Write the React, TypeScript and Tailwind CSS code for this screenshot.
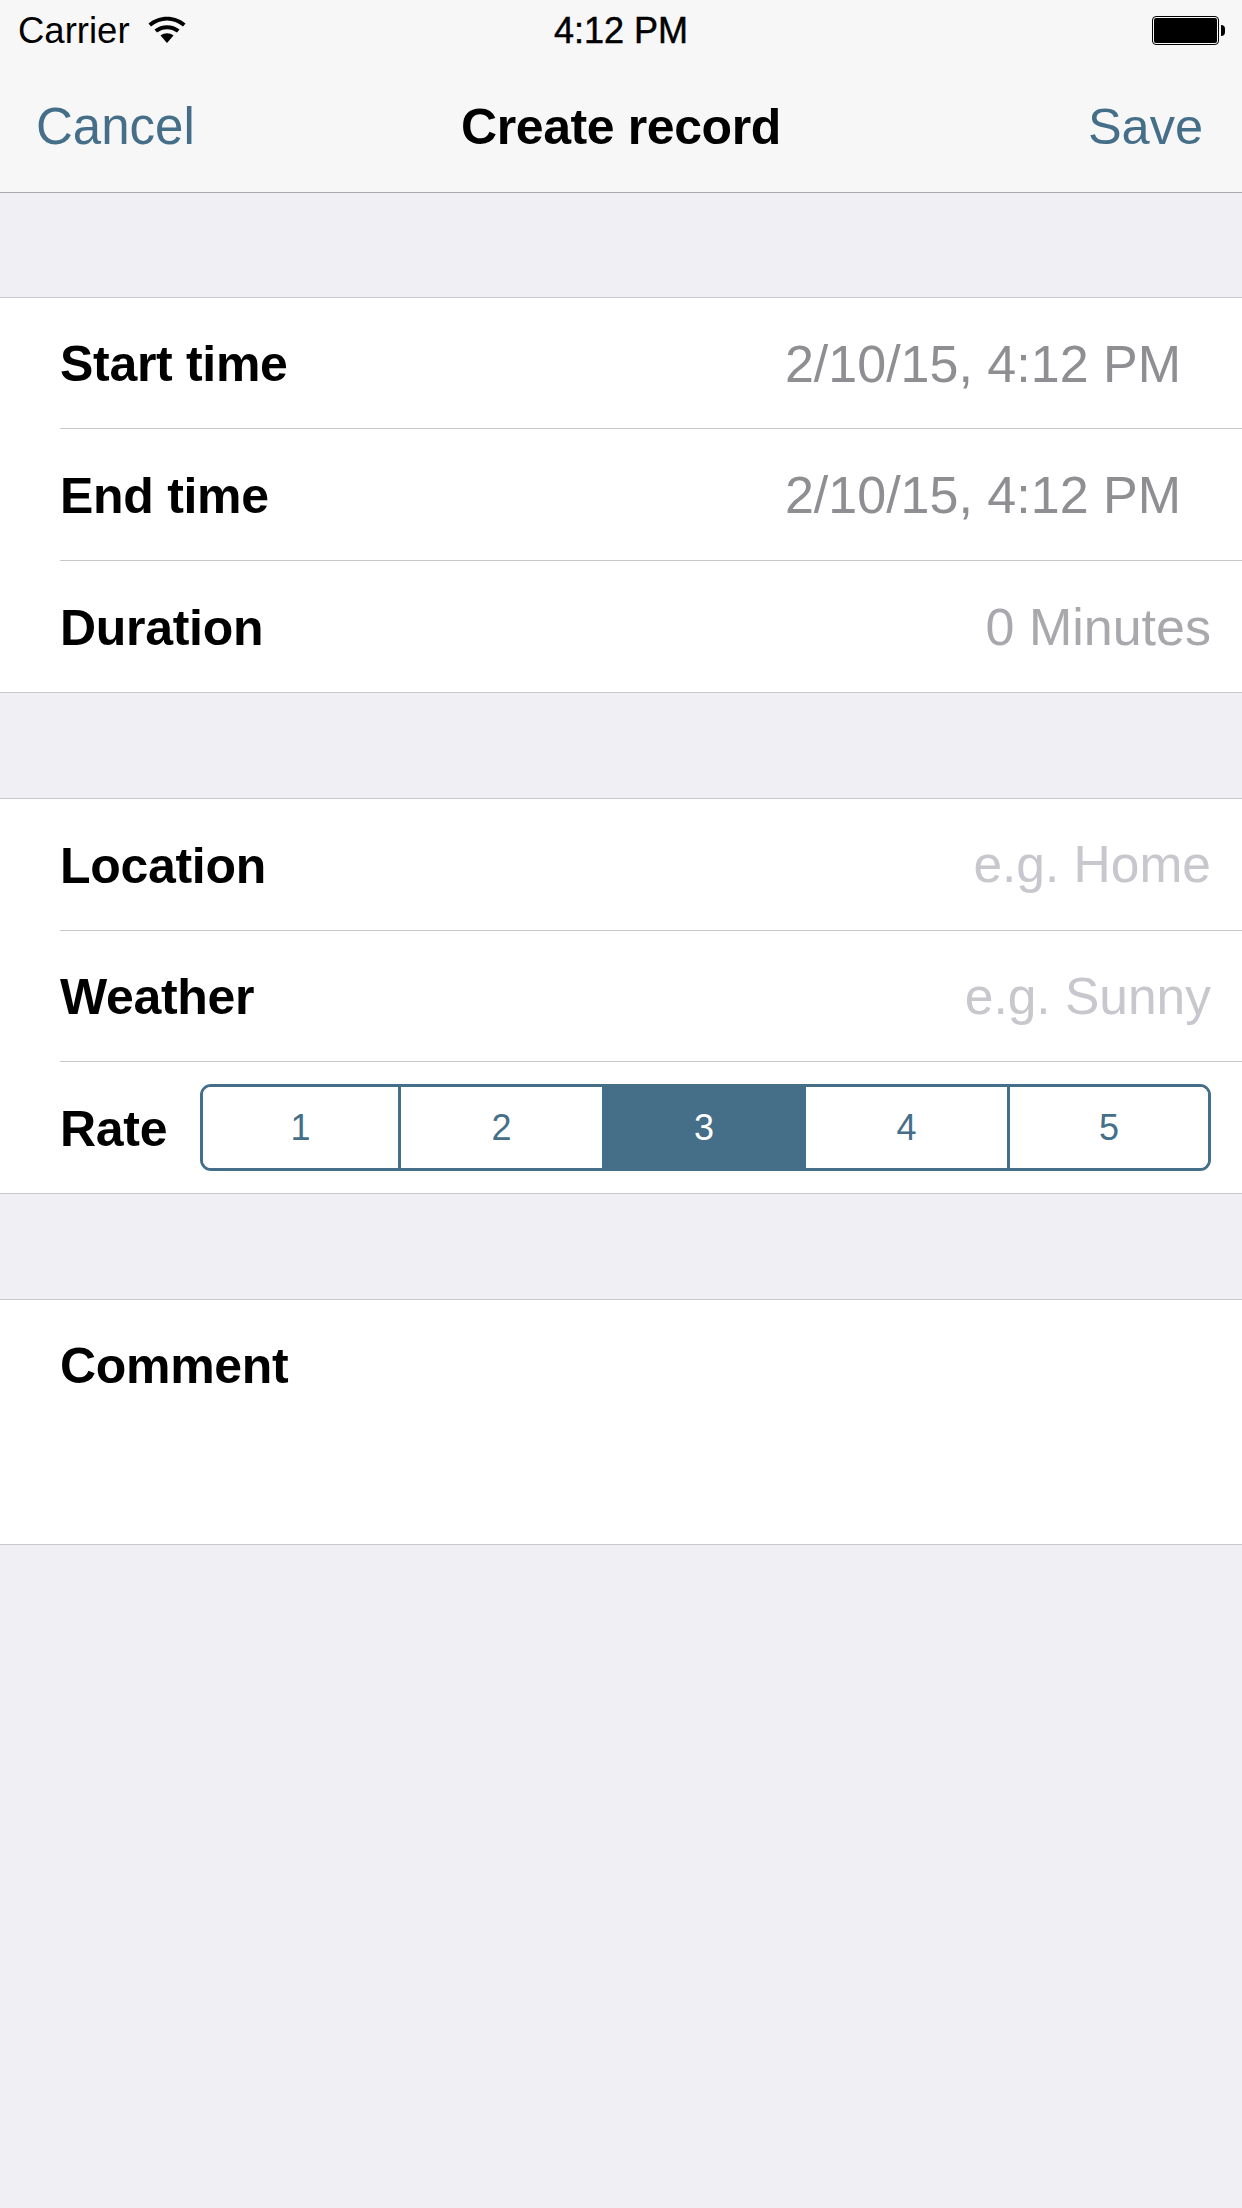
const font = "font-['Liberation_Sans',Arial,sans-serif]";
const labelClass = "text-[50px] font-bold tracking-[-0.3px] text-black";

function Row({
  label,
  value,
  valueClass,
  heightClass,
  divider = true,
}: {
  label: string;
  value: string;
  valueClass: string;
  heightClass: string;
  divider?: boolean;
}) {
  return (
    <div className="pl-[60px]">
      <div
        className={`flex items-center justify-between ${heightClass} ${
          divider ? "border-b border-[#c8c7cc]" : ""
        }`}
      >
        <span className={`pt-[3px] ${labelClass}`}>{label}</span>
        <span className={`pt-[1px] ${valueClass}`}>{value}</span>
      </div>
    </div>
  );
}

function Wifi() {
  return (
    <svg width="38" height="28" viewBox="0 0 38 28" className="ml-[18px]">
      <path d="M0.5 7.5C11 -1.5 27 -1.5 37.5 7.5L35 10.5C25.5 2.5 12.5 2.5 3 10.5Z" fill="#000" />
      <path d="M6.5 13.5C13.5 7.8 24.5 7.8 31.5 13.5L29 16.6C23 12 15 12 9 16.6Z" fill="#000" />
      <path d="M12.5 19.5C16.5 16.6 21.5 16.6 25.5 19.5L19 27Z" fill="#000" />
    </svg>
  );
}

function Battery() {
  return (
    <div className="flex items-center gap-[2px]">
      <div className="h-[29px] w-[67px] rounded-[4px] border border-black p-[1px]">
        <div className="h-full w-full rounded-[2px] bg-black" />
      </div>
      <div className="h-[11px] w-[4px] rounded-r-full bg-black" />
    </div>
  );
}

const rates = [
  { n: 1, cls: "w-[198px] border-r-[3px] border-[#456f89] bg-white text-[#456f89]" },
  { n: 2, cls: "w-[201px] bg-white text-[#456f89]" },
  { n: 3, cls: "w-[204px] bg-[#456f89] text-white" },
  { n: 4, cls: "w-[204px] border-r-[3px] border-[#456f89] bg-white text-[#456f89]" },
  { n: 5, cls: "w-[198px] bg-white text-[#456f89]" },
];

function RateControl() {
  return (
    <div className="flex h-[87px] w-[1011px] overflow-hidden rounded-[11px] border-[3px] border-[#456f89]">
      {rates.map((r) => (
        <div key={r.n} className={`flex items-center justify-center text-[36px] ${r.cls}`}>
          {r.n}
        </div>
      ))}
    </div>
  );
}

export default function App() {
  return (
    <div className={`${font} flex h-[2208px] w-[1242px] flex-col bg-[#efeff4]`}>
      <header className="h-[193px] border-b border-[#a9a9ad] bg-[#f7f7f8]">
        <div className="relative flex h-[60px] items-center justify-between pl-[18px] pr-[17px]">
          <div className="flex items-center">
            <span className="pt-[2px] text-[36.5px] text-black">Carrier</span>
            <Wifi />
          </div>
          <span className="absolute left-0 right-0 pt-[2px] text-center text-[36px] text-black [-webkit-text-stroke:0.5px_black]">
            4:12 PM
          </span>
          <Battery />
        </div>
        <div className="grid h-[132px] grid-cols-[1fr_auto_1fr] items-center px-[39px] pt-[2px] text-[51px] text-[#456f89]">
          <span className="-ml-[3px]">Cancel</span>
          <span className="text-[50px] font-bold tracking-[-0.4px] text-black">Create record</span>
          <span className="text-right text-[50.5px]">Save</span>
        </div>
      </header>

      <section className="mt-[104px] border-y border-[#c8c7cc] bg-white">
        <Row label="Start time" value="2/10/15, 4:12 PM" valueClass="pr-[61px] text-[52px] text-[#8e8e93]" heightClass="h-[131px]" />
        <Row label="End time" value="2/10/15, 4:12 PM" valueClass="pr-[61px] text-[52px] text-[#8e8e93]" heightClass="h-[132px]" />
        <Row label="Duration" value="0 Minutes" valueClass="pr-[31px] text-[52px] text-[#a9a9ad]" heightClass="h-[131px]" divider={false} />
      </section>

      <section className="mt-[105px] border-y border-[#c8c7cc] bg-white">
        <Row label="Location" value="e.g. Home" valueClass="pr-[31px] text-[51.5px] text-[#c7c7cd]" heightClass="h-[132px]" />
        <Row label="Weather" value="e.g. Sunny" valueClass="pr-[31px] text-[51.5px] text-[#c7c7cd]" heightClass="h-[131px]" />
        <div className="flex h-[131px] items-center justify-between pl-[60px] pr-[31px]">
          <span className={`pt-[3px] ${labelClass}`}>Rate</span>
          <RateControl />
        </div>
      </section>

      <section className="mt-[105px] h-[246px] border-y border-[#c8c7cc] bg-white pl-[60px] pt-[29px]">
        <span className={labelClass}>Comment</span>
      </section>
    </div>
  );
}
